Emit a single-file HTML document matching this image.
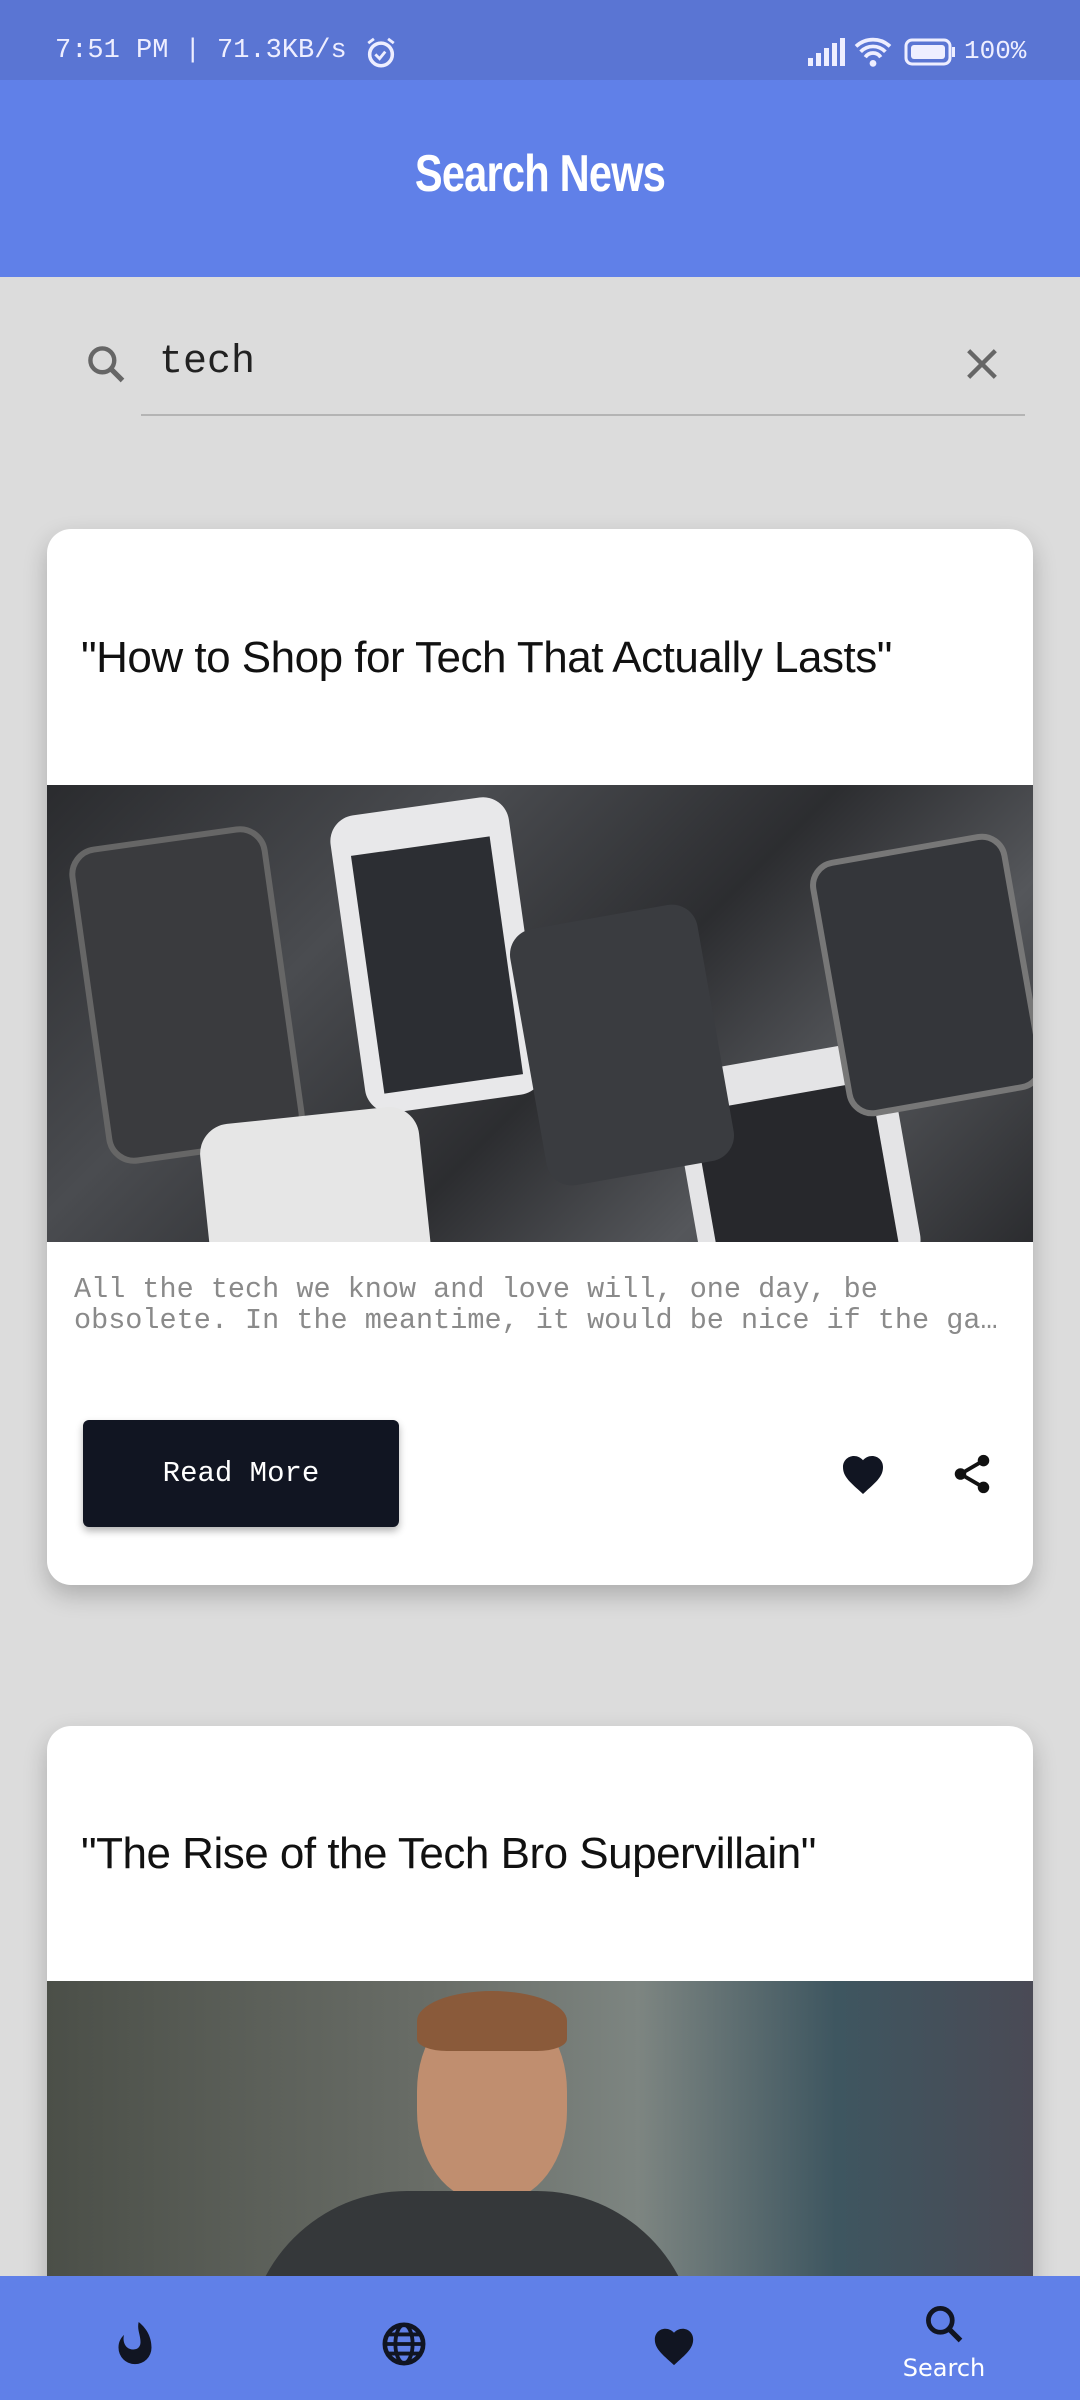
<!DOCTYPE html>
<html><head><meta charset="utf-8"><style>
*{margin:0;padding:0;box-sizing:border-box}
html,body{width:1080px;height:2400px;overflow:hidden}
body{background:#dcdcdc;position:relative;font-family:"Liberation Sans",sans-serif}
.abs{position:absolute}
.status{left:0;top:0;width:1080px;height:80px;background:#5a75d3;color:#eef;font-family:"Liberation Mono",monospace;font-size:27px}
.header{left:0;top:80px;width:1080px;height:197px;background:#6080e8}
.title{width:1080px;text-align:center;top:144px;color:#fff;font-weight:bold;font-size:52px;transform:scaleX(.8);letter-spacing:-1px}
.card{left:47px;width:986px;background:#fff;border-radius:24px;box-shadow:0 10px 24px rgba(0,0,0,.22);overflow:hidden}
.ct{left:34px;font-size:44px;color:#111;letter-spacing:-0.5px}
.img{left:0;width:986px;overflow:hidden}
.nav{left:0;top:2276px;width:1080px;height:124px;background:#6080e8}
</style></head><body>
<div class="abs status">
 <div class="abs" style="left:55px;top:36px">7:51 PM | 71.3KB/s</div>
 <svg class="abs" style="left:364px;top:36px" width="34" height="34" viewBox="0 0 24 24"><circle cx="12" cy="13" r="8" fill="none" stroke="#eef" stroke-width="2.5"/><path d="M8 13l3 3 4-5M3 5l4-3M21 5l-4-3" stroke="#eef" stroke-width="2" fill="none"/></svg>
 <svg class="abs" style="left:806px;top:38px" width="40" height="28"><rect x="2" y="20" width="5" height="8" fill="#eef"/><rect x="10" y="15" width="5" height="13" fill="#eef"/><rect x="18" y="10" width="5" height="18" fill="#eef"/><rect x="26" y="5" width="5" height="23" fill="#eef"/><rect x="34" y="0" width="5" height="28" fill="#eef"/></svg>
 <svg class="abs" style="left:854px;top:34px" width="38" height="34" viewBox="0 0 24 22"><path d="M1 8a16 16 0 0 1 22 0M4 11.5a11 11 0 0 1 16 0M7 15a6 6 0 0 1 10 0" stroke="#eef" stroke-width="2.4" fill="none"/><circle cx="12" cy="19" r="2.2" fill="#eef"/></svg>
 <svg class="abs" style="left:904px;top:38px" width="52" height="28"><rect x="2" y="2" width="44" height="24" rx="6" fill="none" stroke="#eef" stroke-width="3"/><rect x="7" y="7" width="34" height="14" rx="3" fill="#eef"/><rect x="48" y="9" width="3" height="10" fill="#eef"/></svg>
 <div class="abs" style="left:964px;top:36px;font-size:26px">100%</div>
</div>
<div class="abs header"></div>
<div class="abs title">Search News</div>

<svg class="abs" style="left:84px;top:342px" width="44" height="44" viewBox="0 0 24 24"><circle cx="10" cy="10" r="6.5" fill="none" stroke="#666" stroke-width="2.4"/><path d="M14.5 14.5L21 21" stroke="#666" stroke-width="2.8"/></svg>
<div class="abs" style="left:159px;top:340px;font-family:'Liberation Mono',monospace;font-size:40px;color:#222">tech</div>
<svg class="abs" style="left:962px;top:344px" width="40" height="40" viewBox="0 0 24 24"><path d="M4 4L20 20M20 4L4 20" stroke="#666" stroke-width="2.6"/></svg>
<div class="abs" style="left:141px;top:414px;width:884px;height:2px;background:#b4b4b4"></div>

<div class="abs card" style="top:529px;height:1056px">
 <div class="abs ct" style="top:104px">"How to Shop for Tech That Actually Lasts"</div>
 <div class="abs img" style="top:256px;height:457px;background:linear-gradient(135deg,#2a2b2e,#4a4c50 30%,#2c2d30 55%,#55575b 75%,#2b2c2f)">
  <div class="abs" style="left:40px;top:50px;width:200px;height:320px;background:#3a3b3e;border-radius:28px;transform:rotate(-8deg);border:6px solid #666"></div>
  <div class="abs" style="left:300px;top:20px;width:180px;height:300px;background:#e8e8ea;border-radius:26px;transform:rotate(-8deg)"></div>
  <div class="abs" style="left:320px;top:60px;width:140px;height:240px;background:#2c2e33;transform:rotate(-8deg)"></div>
  <div class="abs" style="left:160px;top:330px;width:220px;height:200px;background:#e6e6e6;border-radius:30px;transform:rotate(-6deg)"></div>
  <div class="abs" style="left:640px;top:270px;width:220px;height:230px;background:#e4e4e6;border-radius:30px;transform:rotate(-10deg)"></div>
  <div class="abs" style="left:660px;top:310px;width:180px;height:180px;background:#27282c;transform:rotate(-10deg)"></div>
  <div class="abs" style="left:480px;top:130px;width:190px;height:260px;background:#3a3c40;border-radius:26px;transform:rotate(-10deg)"></div>
  <div class="abs" style="left:780px;top:60px;width:200px;height:260px;background:#34363a;border-radius:26px;transform:rotate(-10deg);border:6px solid #777"></div>
 </div>
 <div class="abs" style="left:27px;top:745px;font-family:'Liberation Mono',monospace;font-size:28.5px;line-height:31px;color:#8a8a8a;white-space:pre">All the tech we know and love will, one day, be
obsolete. In the meantime, it would be nice if the ga…</div>
 <div class="abs" style="left:36px;top:891px;width:316px;height:107px;background:#111522;border-radius:6px;box-shadow:0 4px 8px rgba(0,0,0,.3);color:#fff;font-family:'Liberation Mono',monospace;font-size:29px;text-align:center;line-height:107px">Read More</div>
 <svg class="abs" style="left:792px;top:922px" width="48" height="46" viewBox="0 0 24 22"><path d="M12 21l-1.5-1.4C5 14.7 2 12 2 7.5 2 4.4 4.4 2 7.5 2c1.7 0 3.4.8 4.5 2.1C13.1 2.8 14.8 2 16.5 2 19.6 2 22 4.4 22 7.5c0 4.5-3 7.2-8.5 12.1z" fill="#111522"/></svg>
 <svg class="abs" style="left:902px;top:922px" width="46" height="46" viewBox="0 0 24 24"><circle cx="18" cy="5" r="3" fill="#111"/><circle cx="6" cy="12" r="3" fill="#111"/><circle cx="18" cy="19" r="3" fill="#111"/><path d="M6 12L18 5M6 12l12 7" stroke="#111" stroke-width="2"/></svg>
</div>

<div class="abs card" style="top:1726px;height:600px">
 <div class="abs ct" style="top:103px">"The Rise of the Tech Bro Supervillain"</div>
 <div class="abs img" style="top:255px;height:400px;background:linear-gradient(90deg,#4b4f48,#6a6e68 40%,#7d8581 60%,#3e5660 80%,#4a4a55)">
  <div class="abs" style="left:370px;top:20px;width:150px;height:200px;background:#c08e6f;border-radius:45%"></div>
  <div class="abs" style="left:370px;top:10px;width:150px;height:60px;background:#8a5a3a;border-radius:50% 50% 20% 20%"></div>
  <div class="abs" style="left:200px;top:210px;width:450px;height:250px;background:#35383a;border-radius:160px 160px 0 0"></div>
 </div>
</div>

<div class="abs nav">
 <svg class="abs" style="left:113px;top:44px" width="44" height="48" viewBox="0 0 24 26"><path d="M14 1c5 4 7 9 7 14a9 9 0 0 1-18 0c0-3 1-5 3-7-1 4 1 8 5 8 3 0 4-2 4-4 0-4-2-7-1-11z" fill="#111522"/></svg>
 <svg class="abs" style="left:381px;top:45px" width="46" height="46" viewBox="0 0 24 24"><circle cx="12" cy="12" r="10" fill="none" stroke="#111522" stroke-width="2.4"/><ellipse cx="12" cy="12" rx="4.5" ry="10" fill="none" stroke="#111522" stroke-width="2"/><path d="M2 12h20M3.5 7h17M3.5 17h17" stroke="#111522" stroke-width="2"/></svg>
 <svg class="abs" style="left:651px;top:48px" width="46" height="44" viewBox="0 0 24 22"><path d="M12 21l-1.5-1.4C5 14.7 2 12 2 7.5 2 4.4 4.4 2 7.5 2c1.7 0 3.4.8 4.5 2.1C13.1 2.8 14.8 2 16.5 2 19.6 2 22 4.4 22 7.5c0 4.5-3 7.2-8.5 12.1z" fill="#111522"/></svg>
 <svg class="abs" style="left:922px;top:26px" width="44" height="44" viewBox="0 0 24 24"><circle cx="10" cy="10" r="6.5" fill="none" stroke="#111522" stroke-width="2.6"/><path d="M14.5 14.5L21 21" stroke="#111522" stroke-width="2.8"/></svg>
 <div class="abs" style="left:894px;top:78px;width:100px;text-align:center;color:#fff;font-family:'DejaVu Sans',sans-serif;font-size:24px">Search</div>
</div>
</body></html>
